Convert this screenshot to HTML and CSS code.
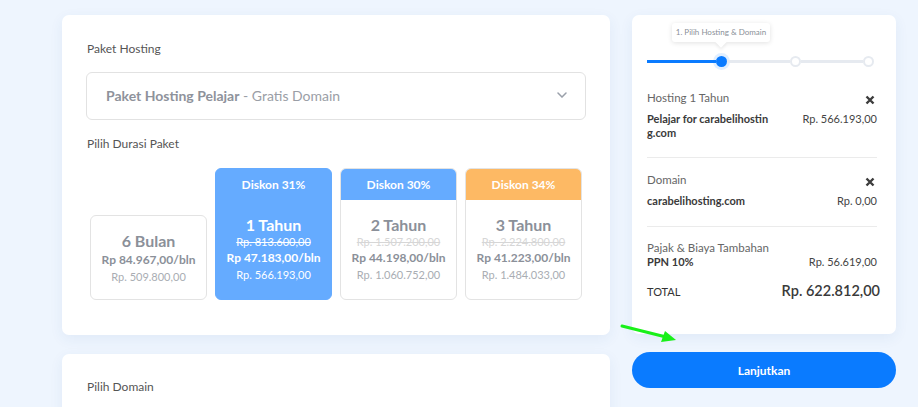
FILE: index.html
```html
<!DOCTYPE html>
<html lang="id">
<head>
    <meta charset="UTF-8">
    <meta name="viewport" content="width=device-width, initial-scale=1.0">
    <title>Checkout Hosting</title>
    <link rel="stylesheet" href="styles.css">
</head>
<body>
    <div class="page">
        <div class="main-col">
            <div class="card card-main">
                <p class="field-label">Paket Hosting</p>
                <div class="select-box">
                    <span class="select-text"><b>Paket Hosting Pelajar</b> - Gratis Domain</span>
                    <svg class="chevron" width="10" height="6" viewBox="0 0 10 6"><path d="M1 1l4 4 4-4" fill="none" stroke="#9aa0aa" stroke-width="1.5" stroke-linecap="round"/></svg>
                </div>

                <p class="field-label label-durasi">Pilih Durasi Paket</p>
                <div class="durations">
                    <div class="dur-card">
                        <div class="dur-body">
                            <div class="dur-title">6 Bulan</div>
                            <div class="dur-month">Rp 84.967,00/bln</div>
                            <div class="dur-total">Rp. 509.800,00</div>
                        </div>
                    </div>
                    <div class="dur-card active">
                        <div class="dur-head">Diskon 31%</div>
                        <div class="dur-body">
                            <div class="dur-title">1 Tahun</div>
                            <div class="dur-strike">Rp. 813.600,00</div>
                            <div class="dur-month">Rp 47.183,00/bln</div>
                            <div class="dur-total">Rp. 566.193,00</div>
                        </div>
                    </div>
                    <div class="dur-card">
                        <div class="dur-head">Diskon 30%</div>
                        <div class="dur-body">
                            <div class="dur-title">2 Tahun</div>
                            <div class="dur-strike">Rp. 1.507.200,00</div>
                            <div class="dur-month">Rp 44.198,00/bln</div>
                            <div class="dur-total">Rp. 1.060.752,00</div>
                        </div>
                    </div>
                    <div class="dur-card">
                        <div class="dur-head orange">Diskon 34%</div>
                        <div class="dur-body">
                            <div class="dur-title">3 Tahun</div>
                            <div class="dur-strike">Rp. 2.224.800,00</div>
                            <div class="dur-month">Rp 41.223,00/bln</div>
                            <div class="dur-total">Rp. 1.484.033,00</div>
                        </div>
                    </div>
                </div>
            </div>

            <div class="card card-domain">
                <p class="field-label">Pilih Domain</p>
            </div>
        </div>

        <div class="side-col">
            <div class="card card-summary">
                <div class="stepper">
                    <div class="step-tip">1. Pilih Hosting &amp; Domain</div>
                    <span class="seg seg-1 done"></span>
                    <span class="dot current"></span>
                    <span class="seg seg-2"></span>
                    <span class="dot"></span>
                    <span class="seg seg-3"></span>
                    <span class="dot"></span>
                </div>

                <div class="sum-item">
                    <div class="sum-row">
                        <span class="sum-label">Hosting 1 Tahun</span>
                        <svg class="remove" width="10" height="10" viewBox="0 0 10 10"><path d="M1.5 1.5l7 7M8.5 1.5l-7 7" stroke="#3d3d3d" stroke-width="2.4"/></svg>
                    </div>
                    <div class="sum-row detail">
                        <span class="sum-name wrap">Pelajar for carabelihosting.com</span>
                        <span class="sum-price">Rp. 566.193,00</span>
                    </div>
                </div>

                <div class="sum-item">
                    <div class="sum-row">
                        <span class="sum-label">Domain</span>
                        <svg class="remove" width="10" height="10" viewBox="0 0 10 10"><path d="M1.5 1.5l7 7M8.5 1.5l-7 7" stroke="#3d3d3d" stroke-width="2.4"/></svg>
                    </div>
                    <div class="sum-row detail">
                        <span class="sum-name">carabelihosting.com</span>
                        <span class="sum-price">Rp. 0,00</span>
                    </div>
                </div>

                <div class="sum-item last">
                    <div class="sum-label">Pajak &amp; Biaya Tambahan</div>
                    <div class="sum-row">
                        <span class="sum-name">PPN 10%</span>
                        <span class="sum-price">Rp. 56.619,00</span>
                    </div>
                    <div class="sum-row total">
                        <span class="total-label">TOTAL</span>
                        <span class="total-value">Rp. 622.812,00</span>
                    </div>
                </div>
            </div>

            <button class="btn-next">Lanjutkan</button>
        </div>
    </div>

    <!-- annotation arrow -->
    <svg class="hint-arrow" width="64" height="24" viewBox="0 0 64 24">
        <path d="M2 5L46 16" stroke="#19f019" stroke-width="3" stroke-linecap="round"/>
        <path d="M56 19L41 21L45 10Z" fill="#19f019"/>
    </svg>
</body>
</html>
```

FILE: styles.css
```css
/* Reset */
* {
    margin: 0;
    padding: 0;
    box-sizing: border-box;
}

body {
    font-family: Lato, 'Open Sans', sans-serif;
    background-color: #eef5fe;
    color: #333;
    overflow: hidden;
}

.page {
    display: flex;
    gap: 22px;
    padding: 15px 0 0 62px;
}

/* Columns */
.main-col {
    width: 548px;
    display: flex;
    flex-direction: column;
    gap: 19px;
}

.side-col {
    width: 264px;
}

.card {
    background-color: #fff;
    border-radius: 7px;
    box-shadow: 0 4px 14px rgba(40, 90, 160, 0.07);
}

/* Main card */
.card-main {
    padding: 26px 24px 35px 24px;
}

.field-label {
    font-size: 12px;
    line-height: 16px;
    color: #555;
    padding-left: 1px;
}

.select-box {
    margin-top: 15px;
    height: 48px;
    border: 1px solid #e2e2e2;
    border-radius: 6px;
    display: flex;
    align-items: center;
    justify-content: space-between;
    padding: 0 18px 2px 19px;
}

.select-text {
    font-size: 14px;
    color: #9a9ea6;
}

.select-text b {
    font-weight: 700;
    color: #8e929b;
}

.label-durasi {
    margin-top: 16px;
}

/* Duration cards */
.durations {
    margin-top: 16px;
    display: flex;
    align-items: flex-end;
    gap: 8px;
    padding: 0 4px;
}

.dur-card {
    flex: 1;
    border: 1px solid #e3e3e3;
    border-radius: 6px;
    overflow: hidden;
    text-align: center;
    background-color: #fff;
}

.dur-head {
    height: 31px;
    line-height: 31px;
    background-color: #65abff;
    color: #fff;
    font-size: 12px;
    font-weight: 700;
}

.dur-head.orange {
    background-color: #fdb964;
}

.dur-body {
    padding: 15px 0 15px;
}

.dur-head + .dur-body {
    padding-top: 15px;
    padding-bottom: 17px;
}

.dur-title {
    font-size: 16px;
    line-height: 20px;
    font-weight: 700;
    color: #8b9099;
}

.dur-strike {
    font-size: 11px;
    line-height: 14px;
    color: #d6d6d6;
    text-decoration: line-through;
}

.dur-month {
    font-size: 12px;
    line-height: 18px;
    font-weight: 700;
    color: #8b9099;
}

.dur-total {
    margin-top: 1px;
    font-size: 11px;
    line-height: 14px;
    color: #a9adb3;
}

.dur-card.active {
    background-color: #65abff;
    border-color: #65abff;
}

.dur-card.active .dur-title,
.dur-card.active .dur-strike,
.dur-card.active .dur-month,
.dur-card.active .dur-total {
    color: #fff;
}

/* Domain card */
.card-domain {
    height: 80px;
    padding: 25px 24px;
}

/* Summary */
.card-summary {
    padding: 0 19px 33px 15px;
}

.stepper {
    position: relative;
    display: flex;
    align-items: center;
    padding-top: 41px;
}

.seg {
    height: 3px;
    background-color: #e6eaf0;
}

.seg.done {
    background-color: #0a7bff;
}

.seg-1 { width: 69px; }
.seg-2 { width: 63px; }
.seg-3 { width: 62px; }

.dot {
    width: 11px;
    height: 11px;
    border-radius: 50%;
    border: 2px solid #e6eaf0;
    background-color: #fff;
}

.dot.current {
    border: none;
    background-color: #0a7bff;
    box-shadow: 0 0 0 3px rgba(10, 123, 255, 0.12);
}

.step-tip {
    position: absolute;
    top: 8px;
    left: 25px;
    width: 98px;
    height: 19px;
    line-height: 19px;
    font-size: 8px;
    color: #8a8f98;
    text-align: center;
    background-color: #fff;
    border-radius: 3px;
    box-shadow: 0 1px 5px rgba(0, 0, 0, 0.12);
}

.step-tip::after {
    content: "";
    position: absolute;
    left: 45px;
    bottom: -4px;
    width: 8px;
    height: 8px;
    background-color: #fff;
    transform: rotate(45deg);
    box-shadow: 2px 2px 3px rgba(0, 0, 0, 0.06);
}

.sum-item {
    padding: 24px 0 17px;
    border-bottom: 1px solid #ebebeb;
}

.sum-item + .sum-item {
    padding-top: 15px;
    padding-bottom: 18px;
}

.sum-item.last {
    border-bottom: none;
    padding-top: 14px;
    padding-bottom: 0;
}

.sum-row {
    display: flex;
    justify-content: space-between;
    align-items: flex-start;
}

.sum-row.detail {
    margin-top: 7px;
}

.sum-label {
    font-size: 11.5px;
    line-height: 14px;
    color: #666;
}

.remove {
    margin-top: 4px;
    margin-right: 2px;
}

.sum-name {
    font-size: 11px;
    line-height: 14px;
    font-weight: 700;
    color: #3a3a3a;
}

.sum-name.wrap {
    width: 124px;
    word-break: break-all;
}

.sum-price {
    font-size: 11px;
    line-height: 14px;
    color: #444;
}

.sum-row.total {
    margin-top: 12px;
    align-items: center;
}

.total-label {
    font-size: 11px;
    color: #333;
}

.total-value {
    font-size: 14.5px;
    line-height: 20px;
    font-weight: 600;
    color: #3a3a3a;
    margin-right: -3px;
}

/* Next button */
.btn-next {
    margin-top: 18px;
    width: 100%;
    height: 36px;
    border: none;
    border-radius: 18px;
    background-color: #0a7bff;
    color: #fff;
    font-family: inherit;
    font-size: 12px;
    font-weight: 700;
    cursor: pointer;
}

.hint-arrow {
    position: absolute;
    left: 620px;
    top: 321px;
}
```
